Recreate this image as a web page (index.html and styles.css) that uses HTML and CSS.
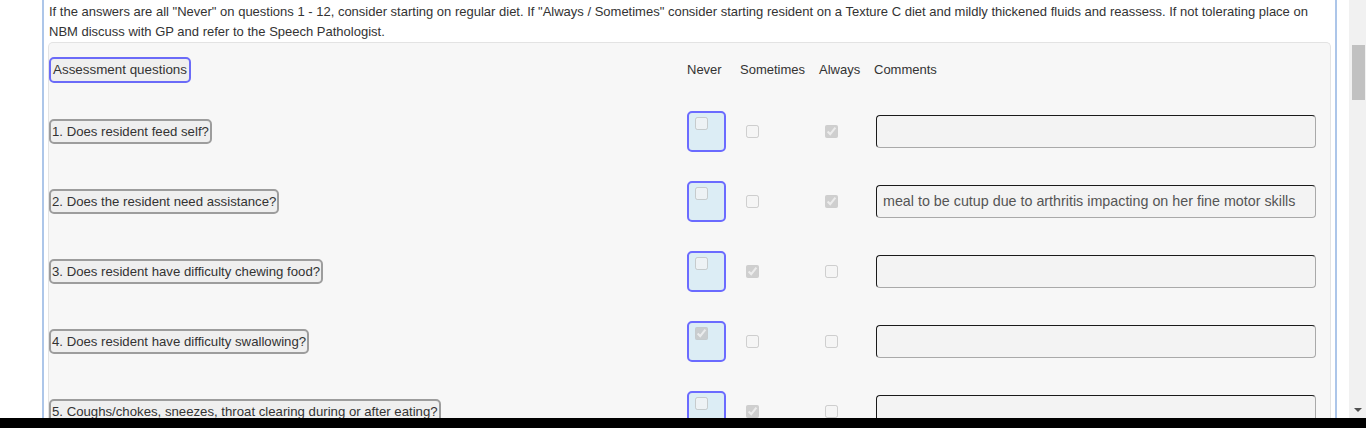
FILE: index.html
```html
<!DOCTYPE html>
<html lang="en">
<head>
<meta charset="utf-8">
<title>Assessment</title>
<link rel="stylesheet" href="styles.css">
</head>
<body>
<div class="screen">
  <div class="viewport">
    <div class="page">
      <div class="sheet">
        <p class="intro">If the answers are all "Never" on questions 1 - 12, consider starting on regular diet. If "Always / Sometimes" consider starting resident on a Texture C diet and mildly thickened fluids and reassess. If not tolerating place on NBM discuss with GP and refer to the Speech Pathologist.</p>
        <div class="panel">
          <div class="row head">
            <div class="cell q"><span class="qlabel focus">Assessment questions</span></div>
            <div class="cell col-never">Never</div>
            <div class="cell col-some">Sometimes</div>
            <div class="cell col-always">Always</div>
            <div class="cell col-comment">Comments</div>
          </div>

          <div class="row">
            <div class="cell q"><span class="qlabel">1. Does resident feed self?</span></div>
            <div class="cell col-never"><span class="nbox"><input type="checkbox" disabled></span></div>
            <div class="cell col-some"><input type="checkbox" class="cb" disabled></div>
            <div class="cell col-always"><input type="checkbox" class="cb" checked disabled></div>
            <div class="cell col-comment"><input type="text" class="comment" value=""></div>
          </div>

          <div class="row">
            <div class="cell q"><span class="qlabel">2. Does the resident need assistance?</span></div>
            <div class="cell col-never"><span class="nbox"><input type="checkbox" disabled></span></div>
            <div class="cell col-some"><input type="checkbox" class="cb" disabled></div>
            <div class="cell col-always"><input type="checkbox" class="cb" checked disabled></div>
            <div class="cell col-comment"><input type="text" class="comment" value="meal to be cutup due to arthritis impacting on her fine motor skills"></div>
          </div>

          <div class="row">
            <div class="cell q"><span class="qlabel">3. Does resident have difficulty chewing food?</span></div>
            <div class="cell col-never"><span class="nbox"><input type="checkbox" disabled></span></div>
            <div class="cell col-some"><input type="checkbox" class="cb" checked disabled></div>
            <div class="cell col-always"><input type="checkbox" class="cb" disabled></div>
            <div class="cell col-comment"><input type="text" class="comment" value=""></div>
          </div>

          <div class="row">
            <div class="cell q"><span class="qlabel">4. Does resident have difficulty swallowing?</span></div>
            <div class="cell col-never"><span class="nbox"><input type="checkbox" checked disabled></span></div>
            <div class="cell col-some"><input type="checkbox" class="cb" disabled></div>
            <div class="cell col-always"><input type="checkbox" class="cb" disabled></div>
            <div class="cell col-comment"><input type="text" class="comment" value=""></div>
          </div>

          <div class="row">
            <div class="cell q"><span class="qlabel">5. Coughs/chokes, sneezes, throat clearing during or after eating?</span></div>
            <div class="cell col-never"><span class="nbox"><input type="checkbox" disabled></span></div>
            <div class="cell col-some"><input type="checkbox" class="cb" checked disabled></div>
            <div class="cell col-always"><input type="checkbox" class="cb" disabled></div>
            <div class="cell col-comment"><input type="text" class="comment" value=""></div>
          </div>
        </div>
      </div>
    </div>
    <div class="scrollbar">
      <div class="thumb"></div>
      <div class="track"></div>
      <div class="arrow"></div>
    </div>
  </div>
  <div class="blackbar"></div>
</div>
</body>
</html>
```

FILE: styles.css
```css
* { box-sizing: border-box; }
html, body { margin: 0; padding: 0; }
body {
  background: #ffffff;
  font-family: "Liberation Sans", Arial, sans-serif;
  font-size: 13px;
  color: #333333;
  overflow: hidden;
}
.screen {
  width: 1366px;
  height: 428px;
  display: flex;
  flex-direction: column;
  overflow: hidden;
}
.viewport {
  height: 418px;
  flex: none;
  display: flex;
  overflow: hidden;
}
.page {
  width: 1349px;
  flex: none;
  padding-left: 42px;
  padding-right: 12px;
}
.sheet {
  height: 100%;
  border-left: 2px solid #adc6e9;
  border-right: 2px solid #adc6e9;
  padding: 2px 4px 0 4px;
}
.intro {
  margin: 0;
  line-height: 20px;
  padding-left: 1px;
}
.panel {
  background: #f7f7f7;
  border: 1px solid #e3e3e3;
  border-bottom: none;
  border-radius: 5px 5px 0 0;
  height: 400px;
}
.row {
  display: grid;
  grid-template-columns: 638px 53px 79px 55px 450px;
  align-items: center;
  height: 70px;
}
.row.head { height: 53px; }
.cell { display: flex; align-items: center; }
.qlabel {
  display: inline-block;
  border: 2px solid #9d9d9d;
  border-radius: 5px;
  background: #efefef;
  padding: 4px 1px 3px 1px;
  line-height: 14px;
  font-size: 13.2px;
  white-space: nowrap;
}
.qlabel.focus {
  border-color: #6b6bf8;
  padding: 4px 2px 4px 2px;
  font-size: 13.4px;
}
.nbox {
  display: block;
  width: 39px;
  height: 41px;
  border: 2px solid #6b6bff;
  border-radius: 5px;
  background: #dcedf5;
}
.nbox input {
  display: block;
  width: 13px;
  height: 13px;
  margin: 4px 0 0 6px;
}
.cb {
  width: 13px;
  height: 13px;
  margin: 0 0 0 6px;
}
.comment {
  width: 440px;
  height: 33px;
  margin-left: 2px;
  border: 1px solid #a9a9a9;
  border-top-color: #1a1a1a;
  border-left-color: #1a1a1a;
  border-radius: 4px;
  background: #f3f3f3;
  padding: 0 6px;
  font-family: "Liberation Sans", Arial, sans-serif;
  font-size: 14.3px;
  color: #555555;
  outline: none;
}
.scrollbar {
  width: 17px;
  flex: none;
  background: #f1f1f1;
  display: flex;
  flex-direction: column;
  align-items: center;
  padding: 45px 0 6px 0;
}
.thumb {
  width: 13px;
  height: 55px;
  background: #c1c1c1;
  margin-left: 1px;
}
.track { flex: 1; }
.arrow {
  width: 0;
  height: 0;
  border-left: 4px solid transparent;
  border-right: 4px solid transparent;
  border-top: 4px solid #505050;
  margin-left: 1px;
}
.blackbar {
  height: 10px;
  flex: none;
  background: #000000;
}
```
